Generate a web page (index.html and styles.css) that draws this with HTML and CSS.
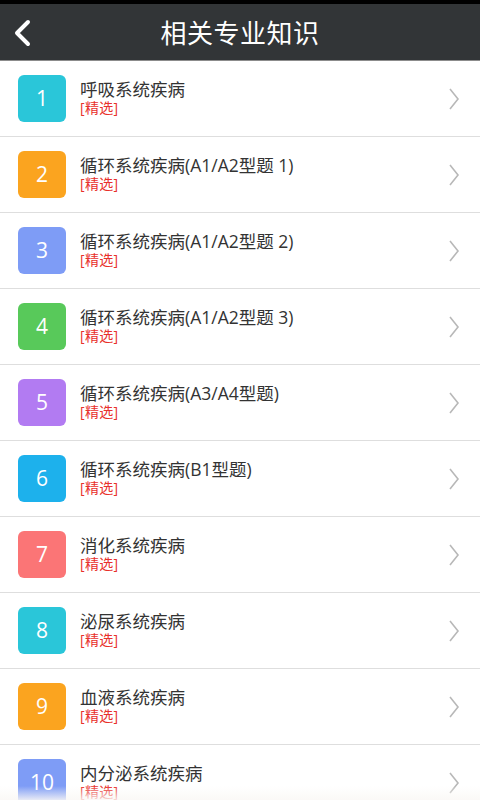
FILE: index.html
```html
<html>

<head>
  <meta charset="utf-8">
  <link rel="stylesheet" href="styles.css">
</head>

<body>
  <div class="statusbar"></div>
  <div class="header">
    <svg class="back" width="20" height="28" viewBox="0 0 20 28">
      <path d="M15 3 L4 14 L15 25" fill="none" stroke="#ffffff" stroke-width="4" stroke-linecap="round" stroke-linejoin="round"/>
    </svg>
    <h1>相关专业知识</h1>
  </div>

  <div class="list">
    <div class="row">
      <div class="badge c-teal">1</div>
      <div class="info"><div class="title">呼吸系统疾病</div><div class="tag">[精选]</div></div>
      <svg class="arrow" width="12" height="24" viewBox="0 0 12 24"><path d="M2 2 L10 12 L2 22" fill="none" stroke="#b8b8b8" stroke-width="1.6"/></svg>
    </div>
    <div class="row">
      <div class="badge c-orange">2</div>
      <div class="info"><div class="title">循环系统疾病(A1/A2型题 1)</div><div class="tag">[精选]</div></div>
      <svg class="arrow" width="12" height="24" viewBox="0 0 12 24"><path d="M2 2 L10 12 L2 22" fill="none" stroke="#b8b8b8" stroke-width="1.6"/></svg>
    </div>
    <div class="row">
      <div class="badge c-blue">3</div>
      <div class="info"><div class="title">循环系统疾病(A1/A2型题 2)</div><div class="tag">[精选]</div></div>
      <svg class="arrow" width="12" height="24" viewBox="0 0 12 24"><path d="M2 2 L10 12 L2 22" fill="none" stroke="#b8b8b8" stroke-width="1.6"/></svg>
    </div>
    <div class="row">
      <div class="badge c-green">4</div>
      <div class="info"><div class="title">循环系统疾病(A1/A2型题 3)</div><div class="tag">[精选]</div></div>
      <svg class="arrow" width="12" height="24" viewBox="0 0 12 24"><path d="M2 2 L10 12 L2 22" fill="none" stroke="#b8b8b8" stroke-width="1.6"/></svg>
    </div>
    <div class="row">
      <div class="badge c-purple">5</div>
      <div class="info"><div class="title">循环系统疾病(A3/A4型题)</div><div class="tag">[精选]</div></div>
      <svg class="arrow" width="12" height="24" viewBox="0 0 12 24"><path d="M2 2 L10 12 L2 22" fill="none" stroke="#b8b8b8" stroke-width="1.6"/></svg>
    </div>
    <div class="row">
      <div class="badge c-sky">6</div>
      <div class="info"><div class="title">循环系统疾病(B1型题)</div><div class="tag">[精选]</div></div>
      <svg class="arrow" width="12" height="24" viewBox="0 0 12 24"><path d="M2 2 L10 12 L2 22" fill="none" stroke="#b8b8b8" stroke-width="1.6"/></svg>
    </div>
    <div class="row">
      <div class="badge c-red">7</div>
      <div class="info"><div class="title">消化系统疾病</div><div class="tag">[精选]</div></div>
      <svg class="arrow" width="12" height="24" viewBox="0 0 12 24"><path d="M2 2 L10 12 L2 22" fill="none" stroke="#b8b8b8" stroke-width="1.6"/></svg>
    </div>
    <div class="row">
      <div class="badge c-teal">8</div>
      <div class="info"><div class="title">泌尿系统疾病</div><div class="tag">[精选]</div></div>
      <svg class="arrow" width="12" height="24" viewBox="0 0 12 24"><path d="M2 2 L10 12 L2 22" fill="none" stroke="#b8b8b8" stroke-width="1.6"/></svg>
    </div>
    <div class="row">
      <div class="badge c-orange">9</div>
      <div class="info"><div class="title">血液系统疾病</div><div class="tag">[精选]</div></div>
      <svg class="arrow" width="12" height="24" viewBox="0 0 12 24"><path d="M2 2 L10 12 L2 22" fill="none" stroke="#b8b8b8" stroke-width="1.6"/></svg>
    </div>
    <div class="row">
      <div class="badge c-blue">10</div>
      <div class="info"><div class="title">内分泌系统疾病</div><div class="tag">[精选]</div></div>
      <svg class="arrow" width="12" height="24" viewBox="0 0 12 24"><path d="M2 2 L10 12 L2 22" fill="none" stroke="#b8b8b8" stroke-width="1.6"/></svg>
    </div>
  </div>

  <div class="fade"></div>
</body>

</html>
```

FILE: styles.css
```css
body {
  margin: 0;
  background: #ffffff;
  font-family: "Open Sans", "Noto Sans CJK SC", sans-serif;
  overflow: hidden;
  height: 800px;
}

.statusbar {
  height: 4px;
  background: #000000;
}

.header {
  position: relative;
  height: 56px;
  background: #323537;
  border-bottom: 1px solid #8c8c8c;
  display: flex;
  align-items: center;
  justify-content: center;
}

.header h1 {
  margin: 0;
  color: #ffffff;
  font-size: 26px;
  font-weight: normal;
  letter-spacing: 0.5px;
}

.back {
  position: absolute;
  left: 13px;
  top: 15px;
}

.row {
  height: 75px;
  border-bottom: 1px solid #dedede;
  display: flex;
  align-items: center;
  padding: 0 20px 0 18px;
}

.badge {
  width: 48px;
  height: 47px;
  border-radius: 6px;
  color: #ffffff;
  font-size: 21px;
  line-height: 47px;
  text-align: center;
  flex: none;
}

.c-teal { background: #2ac6d9; }
.c-orange { background: #fba41f; }
.c-blue { background: #7e9cf6; }
.c-green { background: #58c95a; }
.c-purple { background: #b27bf2; }
.c-sky { background: #1db1ec; }
.c-red { background: #fb7576; }

.info {
  flex: 1;
  margin-left: 14px;
  margin-top: -1px;
}

.title {
  font-size: 17.5px;
  line-height: 20px;
  color: #333333;
}

.tag {
  font-size: 14px;
  line-height: 18px;
  color: #e8302c;
  letter-spacing: 0.3px;
}

.arrow {
  flex: none;
}

.fade {
  position: absolute;
  left: 0;
  right: 0;
  top: 786px;
  height: 14px;
  background: linear-gradient(rgba(255, 255, 255, 0), rgba(250, 248, 245, 0.85));
}
```
